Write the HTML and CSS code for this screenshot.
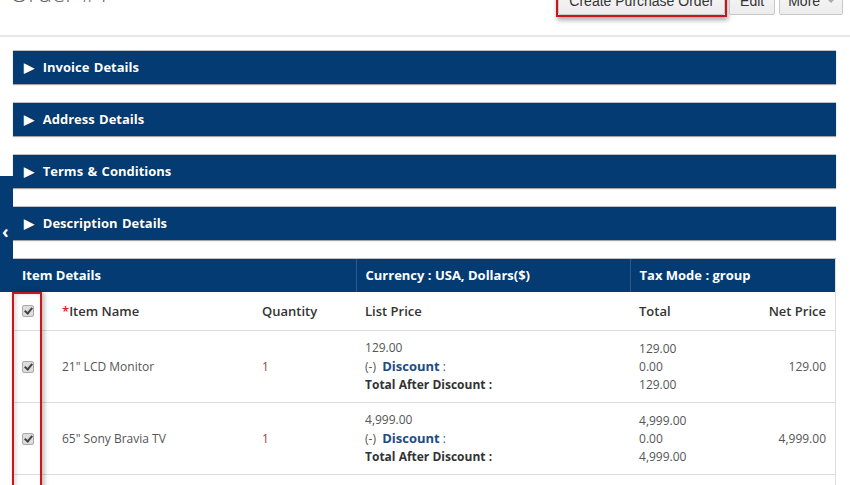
FILE: index.html
```html
<html lang="en">
<head>
    <meta charset="UTF-8">
    <meta name="viewport" content="width=device-width, initial-scale=1.0">
    <title>Order #1</title>
    <link rel="stylesheet" href="styles.css">
</head>
<body>
    <div class="page">
        <div class="header">
            <h2 class="title">Order #1</h2>
            <div class="actions">
                <span class="mark_box"><button class="btn">Create Purchase Order</button></span>
                <button class="btn">Edit</button>
                <button class="btn more">More <span class="caret"></span></button>
            </div>
        </div>

        <div class="side_tab"><span class="chevron">&#8249;</span></div>

        <div class="content">
            <div class="block">&#9654;&nbsp; Invoice Details</div>
            <div class="block">&#9654;&nbsp; Address Details</div>
            <div class="block">&#9654;&nbsp; Terms &amp; Conditions</div>
            <div class="block">&#9654;&nbsp; Description Details</div>

            <table class="items">
                <colgroup>
                    <col class="c_check">
                    <col class="c_name">
                    <col class="c_qty">
                    <col class="c_list">
                    <col class="c_total">
                    <col class="c_net">
                </colgroup>
                <tr class="head">
                    <th colspan="3">Item Details</th>
                    <th class="sep">Currency : USA, Dollars($)</th>
                    <th class="sep" colspan="2">Tax Mode : group</th>
                </tr>
                <tr class="cols">
                    <td><span class="check"></span></td>
                    <td><span class="req">*</span>Item Name</td>
                    <td>Quantity</td>
                    <td>List Price</td>
                    <td>Total</td>
                    <td class="right">Net Price</td>
                </tr>
                <tr class="row">
                    <td><span class="check"></span></td>
                    <td>21" LCD Monitor</td>
                    <td class="qty">1</td>
                    <td>
                        <div>129.00</div>
                        <div>(-)&nbsp; <b class="disc">Discount</b> :</div>
                        <div><b>Total After Discount :</b></div>
                    </td>
                    <td>
                        <div>129.00</div>
                        <div>0.00</div>
                        <div>129.00</div>
                    </td>
                    <td class="right">129.00</td>
                </tr>
                <tr class="row">
                    <td><span class="check"></span></td>
                    <td>65" Sony Bravia TV</td>
                    <td class="qty">1</td>
                    <td>
                        <div>4,999.00</div>
                        <div>(-)&nbsp; <b class="disc">Discount</b> :</div>
                        <div><b>Total After Discount :</b></div>
                    </td>
                    <td>
                        <div>4,999.00</div>
                        <div>0.00</div>
                        <div>4,999.00</div>
                    </td>
                    <td class="right">4,999.00</td>
                </tr>
                <tr class="row">
                    <td></td><td></td><td></td><td></td><td></td><td></td>
                </tr>
            </table>
        </div>

        <div class="mark_column"></div>
    </div>
</body>
</html>
```

FILE: styles.css
```css
body {
    margin: 0;
    background: #fff;
    font-family: "Open Sans", "Liberation Sans", sans-serif;
    color: #555;
    overflow: hidden;
}
.page {
    position: relative;
    width: 850px;
    height: 485px;
    overflow: hidden;
}
.header {
    display: flex;
    justify-content: space-between;
    align-items: flex-end;
    height: 35px;
    border-bottom: 2px solid #e8e8e8;
}
.title {
    margin: -22px 0 0 10px;
    align-self: flex-start;
    font-size: 24px;
    line-height: 30px;
    font-weight: 300;
    color: #666;
}
.actions {
    display: flex;
    align-items: flex-end;
    gap: 4px;
    margin-right: 7px;
    margin-bottom: 20px;
}
.btn {
    font-family: "Liberation Sans", Arial, sans-serif;
    font-size: 14px;
    color: #333;
    background: linear-gradient(#f8f8f8, #ececec);
    border: 1px solid #c8c8c8;
    border-radius: 2px;
    padding: 5px 10px 4px;
    line-height: 18px;
}
.btn.more {
    padding: 5px 7px 4px 8px;
}
.mark_box {
    display: inline-block;
    border: 2px solid #c8161d;
    box-shadow: 1px 3px 5px rgba(0, 0, 0, 0.35);
    margin-bottom: -2px;
    margin-right: -2px;
}
.mark_box .btn {
    display: block;
    padding: 5px 10px 4px;
}
.caret {
    display: inline-block;
    width: 0;
    height: 0;
    margin-left: 3px;
    border-left: 4px solid transparent;
    border-right: 4px solid transparent;
    border-top: 4px solid #aaa;
    vertical-align: 3px;
}
.side_tab {
    position: absolute;
    left: 0;
    top: 176px;
    width: 13px;
    height: 116px;
    background: #033b72;
}
.side_tab .chevron {
    position: absolute;
    left: 2px;
    top: 45px;
    color: #fff;
    font-weight: 700;
    font-size: 18px;
    line-height: 20px;
}
.content {
    padding: 13px 14px 0 13px;
}
.block {
    height: 33px;
    line-height: 33px;
    margin-bottom: 18px;
    padding-left: 11px;
    background: #033b72;
    border-top: 1px solid #b9c2cc;
    box-shadow: 0 1px 1px rgba(0, 0, 0, 0.35);
    color: #fff;
    font-size: 13px;
    font-weight: 700;
    text-shadow: 0 0 1px rgba(0, 0, 0, 0.4);
    word-spacing: 1px;
}
.items {
    width: 823px;
    border-collapse: collapse;
    table-layout: fixed;
    font-size: 12px;
    border-right: 1px solid #ddd;
}
.c_check { width: 40px; }
.c_name { width: 200px; }
.c_qty { width: 103px; }
.c_list { width: 274px; }
.c_total { width: 115px; }
.items th,
.items td {
    padding: 0 9px;
    text-align: left;
    vertical-align: middle;
}
.items .head th {
    height: 33px;
    background: #033b72;
    border-top: 1px solid #b9c2cc;
    color: #fff;
    font-size: 13px;
    font-weight: 700;
}
.items .head th.sep {
    border-left: 1px solid #2d5a88;
}
.items .cols td {
    height: 39px;
    border-bottom: 1px solid #ddd;
    color: #333;
    font-size: 13px;
    font-weight: 600;
}
.items .row td {
    height: 72px;
    border-bottom: 1px solid #ddd;
    line-height: 18px;
}
.items b {
    color: #333;
    font-weight: 700;
}
.items b.disc {
    color: #1d4b85;
    font-size: 13px;
}
.items .row td.qty {
    color: #a33b3b;
}
.items .right {
    text-align: right;
}
.req {
    color: #e02020;
}
.check {
    display: inline-block;
    width: 10px;
    height: 10px;
    border: 1px solid #aaa;
    border-radius: 2px;
    background: #ddd;
    position: relative;
    vertical-align: middle;
}
.check::after {
    content: "";
    position: absolute;
    left: 3px;
    top: 0px;
    width: 3px;
    height: 6px;
    border-right: 2px solid #444;
    border-bottom: 2px solid #444;
    transform: rotate(40deg);
}
.mark_column {
    position: absolute;
    left: 12px;
    top: 292px;
    width: 26px;
    height: 220px;
    border: 2px solid #c8161d;
    box-shadow: 2px 0 5px rgba(0, 0, 0, 0.3), inset 2px 0 4px rgba(0, 0, 0, 0.15);
}
```
